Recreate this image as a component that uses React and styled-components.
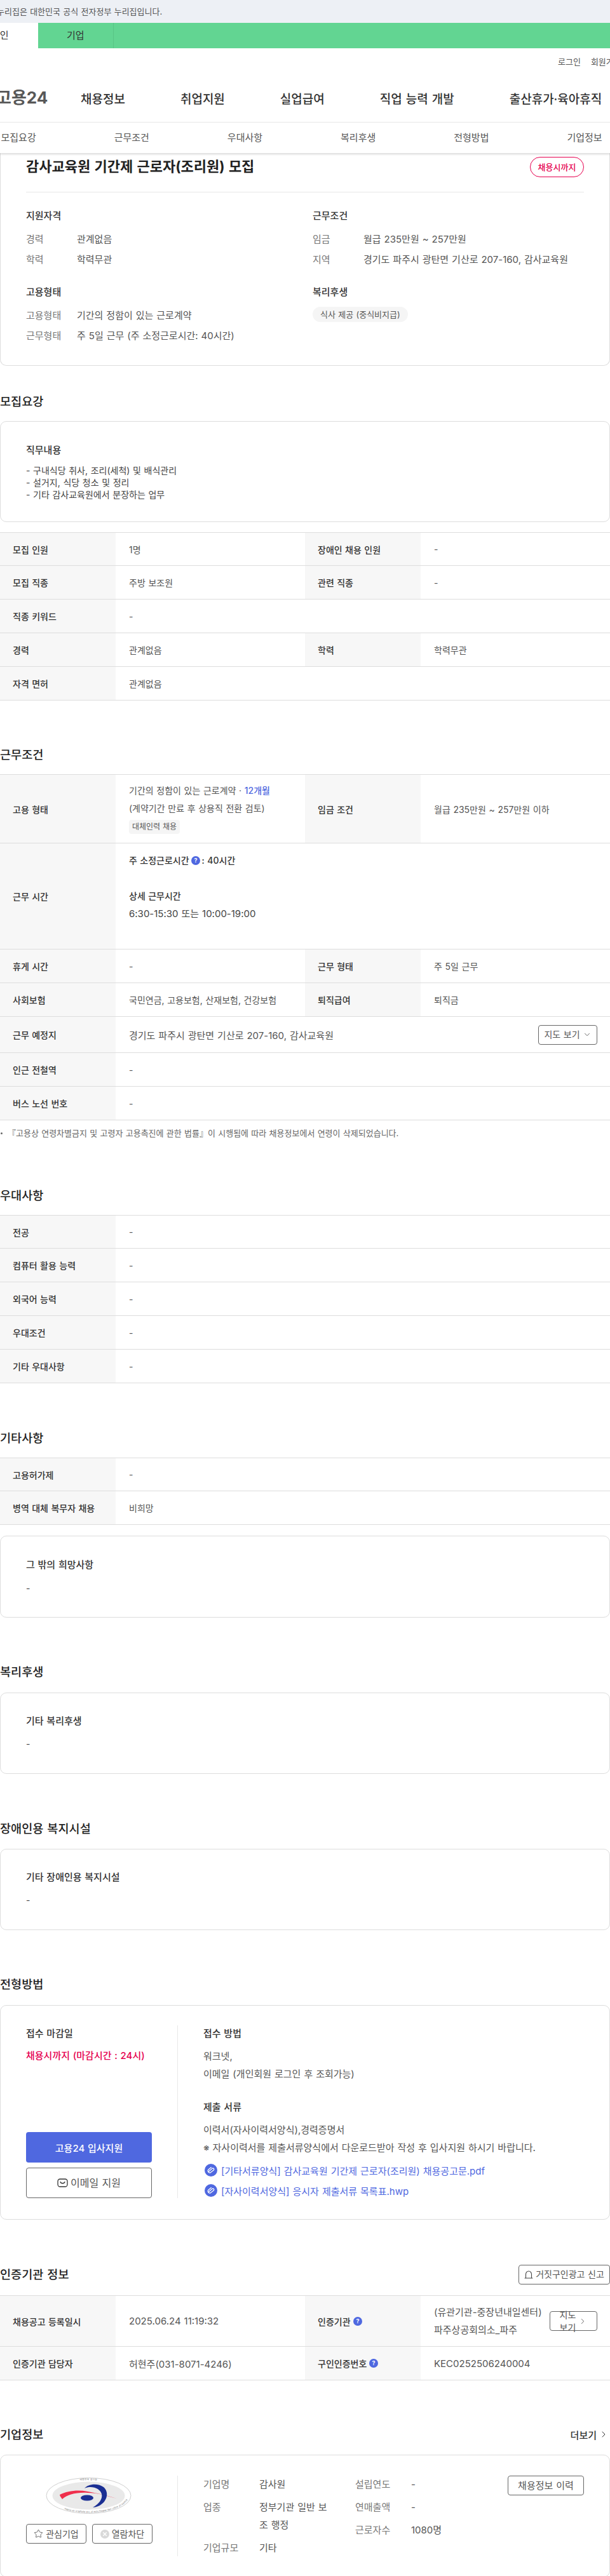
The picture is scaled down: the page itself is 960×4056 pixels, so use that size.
import styled, { createGlobalStyle } from "styled-components";
import { ChevronDown, ChevronRight, Star } from "lucide-react";

const GlobalStyle = createGlobalStyle`
  * { box-sizing: border-box; word-spacing: 0.05em; }
  html, body { margin: 0; padding: 0; background: #fff; }
  body {
    width: 960px;
    overflow-x: hidden;
    font-family: Inter, "Noto Sans CJK KR", "Noto Sans", sans-serif;
    color: #444;
    font-size: 14px;
  }
`;

const Page = styled.div`
  width: 960px;
  height: 4056px;
  overflow: hidden;
`;
const GovBar = styled.div`
  height: 36px;
  background: #edf0f5;
  line-height: 36px;
  font-size: 13px;
  color: #555;
  white-space: nowrap;
  span { display: block; margin-left: -5px; }
`;
const UserTabs = styled.div`
  height: 40px;
  background: #62d592;
  display: flex;
`;
const UserTab = styled.div`
  width: 119.5px;
  text-align: center;
  line-height: 40px;
  font-size: 15px;
  color: #333;
  background: ${(p) => (p.$on ? "#fff" : "transparent")};
  border-right: ${(p) => (p.$on ? "0" : "1px solid #58c585")};
  &:first-child { margin-left: -60px; }
`;
const Util = styled.div`
  height: 40px;
  display: flex;
  align-items: center;
  gap: 16px;
  padding-left: 878px;
  font-size: 13px;
  color: #555;
  white-space: nowrap;
`;
const Gnb = styled.nav`
  height: 76px;
  display: flex;
  align-items: center;
  white-space: nowrap;
  gap: 87px;
  padding-left: 127px;
  position: relative;
`;
const Logo = styled.div`
  position: absolute;
  left: -6px;
  top: 19px;
  font-size: 26px;
  font-weight: 700;
  color: #585858;
  line-height: 38px;
`;
const GnbItem = styled.a`
  font-size: 19px;
  font-weight: 500;
  color: #333;
`;
const SubTabs = styled.div`
  height: 49px;
  border-top: 1px solid #e8e8e8;
  background: #fff;
  position: relative;
  z-index: 2;
  box-shadow: 0 2px 3px rgba(0, 0, 0, 0.15);
`;
const SubTabGrid = styled.div`
  display: grid;
  grid-template-columns: repeat(6, 178.2px);
  margin-left: -60px;
  width: 1070px;
`;
const SubTab = styled.a`
  line-height: 48px;
  text-align: center;
  font-size: 15px;
  color: #555;
`;
const SummaryCard = styled.section`
  height: 335px;
  border: 1px solid #ddd;
  border-top: 0;
  border-radius: 0 0 10px 10px;
  padding: 0 40px;
`;
const TitleRow = styled.div`
  height: 62px;
  padding-top: 6px;
  display: flex;
  justify-content: space-between;
  align-items: flex-start;
  border-bottom: 1px solid #e8e8e8;
`;
const JobTitle = styled.h1`
  margin: 0;
  font-size: 22px;
  font-weight: 700;
  line-height: 30px;
  color: #222;
`;
const DeadlineBadge = styled.span`
  width: 85px;
  height: 32px;
  border: 1px solid #e6004f;
  border-radius: 16px;
  color: #e6004f;
  font-size: 13px;
  font-weight: 500;
  line-height: 30px;
  text-align: center;
`;
const SummaryGrid = styled.div`
  display: grid;
  grid-template-columns: 451px 1fr;
  padding-top: 25px;
  row-gap: 27px;
`;
const GroupTitle = styled.h3`
  margin: 0 0 ${(p) => p.$gap || 13}px;
  font-size: 15px;
  font-weight: 500;
  line-height: 24px;
  color: #333;
`;
const InfoRow = styled.div`
  display: flex;
  line-height: 24px;
  font-size: 15px;
  margin-bottom: 8px;
  color: #555;
  &:last-child { margin-bottom: 0; }
`;
const InfoKey = styled.span`
  width: 80px;
  color: #777;
  flex: none;
`;
const Pill = styled.span`
  display: inline-block;
  height: 24px;
  line-height: 24px;
  padding: 0 12px;
  border-radius: 12px;
  background: #f5f5f5;
  font-size: 13px;
  color: #555;
`;
const Section = styled.section`
  margin-top: ${(p) => p.$top}px;
`;
const HeadRow = styled.div`
  display: flex;
  justify-content: space-between;
  align-items: center;
  height: 28px;
  margin-bottom: ${(p) => p.$gap ?? 17}px;
`;
const Heading = styled.h2`
  margin: 0;
  font-size: 18.6px;
  font-weight: 500;
  line-height: 28px;
  color: #222;
`;
const Box = styled.div`
  border: 1px solid #ddd;
  border-radius: 10px;
  padding: ${(p) => p.$pad || "33px 40px"};
  margin-bottom: ${(p) => p.$below || 0}px;
  margin-top: ${(p) => p.$above || 0}px;
`;
const BoxTitle = styled.h3`
  margin: 0 0 ${(p) => p.$gap || 10}px;
  font-size: 15px;
  font-weight: 500;
  line-height: 24px;
  color: #333;
`;
const BoxText = styled.div`
  line-height: 19px;
  color: #444;
  white-space: pre-line;
`;
const Table = styled.div`
  border-top: 1px solid #ddd;
`;
const Row = styled.div`
  display: grid;
  grid-template-columns: 182px 298px 182px 298px;
  min-height: ${(p) => p.$h || 53}px;
  border-bottom: 1px solid #ddd;
  &:first-child { min-height: ${(p) => (p.$h || 53) - 1}px; }
`;
const Label = styled.div`
  background: #f7f7f7;
  padding-left: 20px;
  display: flex;
  align-items: center;
  gap: 4px;
  font-weight: 500;
  color: #333;
`;
const Value = styled.div`
  grid-column: ${(p) => (p.$wide ? "2 / 5" : "auto")};
  padding: ${(p) => p.$pad || "0 0 0 21px"};
  display: flex;
  align-items: center;
  color: #555;
  font-size: ${(p) => p.$size || 14}px;
`;
const Stack = styled.div`
  line-height: 28px;
`;
const Accent = styled.span`
  color: #4f68e0;
  font-weight: 500;
`;
const SmallTag = styled.span`
  display: block;
  width: 80px;
  height: 22px;
  margin-top: 4px;
  border-radius: 4px;
  background: #f5f5f5;
  font-size: 12px;
  line-height: 22px;
  text-align: center;
  color: #555;
`;
const Strong = styled.div`
  font-weight: 500;
  color: #333;
  display: flex;
  align-items: center;
  gap: 3px;
`;
const WorkTime = styled.div`
  font-size: 15px;
  color: #444;
`;
const OutlineBtn = styled.button`
  font-family: inherit;
  font-size: ${(p) => p.$size || 14}px;
  line-height: 1.4;
  color: #555;
  background: #fff;
  border: 1px solid #666;
  border-radius: 4px;
  height: ${(p) => p.$h || 31}px;
  width: ${(p) => (p.$w ? p.$w + "px" : "auto")};
  padding: 0;
  display: flex;
  align-items: center;
  justify-content: center;
  gap: 4px;
  flex: none;
  margin-left: ${(p) => (p.$push ? "auto" : "0")};
`;
const Note = styled.div`
  margin-top: 11px;
  font-size: 13px;
  line-height: 18px;
  color: #666;
  padding-left: 12px;
  position: relative;
  &::before {
    content: "";
    position: absolute;
    left: 1px;
    top: 8px;
    width: 3px;
    height: 3px;
    border-radius: 50%;
    background: #666;
  }
`;
const ApplyBox = styled(Box)`
  display: flex;
  padding: 31px 40px 32px;
`;
const ApplyLeft = styled.div`
  width: 239px;
  height: 272px;
  padding-right: 40px;
  border-right: 1px solid #e8e8e8;
  display: flex;
  flex-direction: column;
  flex: none;
`;
const ApplyRight = styled.div`
  padding-left: 40px;
`;
const ApplyTitle = styled.div`
  font-size: 15px;
  font-weight: 500;
  line-height: 26px;
  color: #333;
  margin-top: ${(p) => p.$top || 0}px;
  margin-bottom: 9px;
`;
const Deadline = styled.div`
  font-size: 15px;
  font-weight: 500;
  line-height: 26px;
  color: #e6004f;
`;
const ApplyText = styled.div`
  font-size: 15px;
  line-height: 28px;
  color: #555;
`;
const PrimaryBtn = styled.button`
  font-family: inherit;
  margin-top: auto;
  height: 48px;
  border: 0;
  border-radius: 4px;
  background: #4f68e0;
  color: #fff;
  font-size: 15px;
  font-weight: 500;
  margin-bottom: 8px;
`;
const FileLink = styled.a`
  display: flex;
  align-items: center;
  gap: 6px;
  height: 26px;
  margin-top: ${(p) => p.$top}px;
  margin-left: 2px;
  color: #4f68e0;
  font-size: 15px;
  white-space: nowrap;
`;
const MoreLink = styled.a`
  display: flex;
  align-items: center;
  gap: 3px;
  font-size: 15px;
  font-weight: 500;
  color: #333;
  margin-right: 2px;
`;
const CompanyCard = styled(Box)`
  display: flex;
  height: 193px;
  padding: 32px 40px 0;
`;
const CompanyLeft = styled.div`
  width: 239px;
  height: 127px;
  padding-right: 40px;
  border-right: 1px solid #e8e8e8;
  flex: none;
`;
const LogoWrap = styled.div`
  height: 76px;
  padding: 3px 0 0 31px;
`;
const BtnPair = styled.div`
  display: flex;
  gap: 9px;
`;
const CompanyInfo = styled.div`
  padding-left: 40px;
  display: flex;
  flex: 1;
  align-items: flex-start;
`;
const InfoCol = styled.dl`
  margin: 0;
  width: ${(p) => p.$w}px;
  display: grid;
  grid-template-columns: 88px 1fr;
  row-gap: 8px;
  font-size: 15px;
  line-height: 28px;
  color: #666;
  dt { color: #777; }
  dd { margin: 0; color: #555; max-width: 112px; }
`;

const HelpIcon = () => (
  <svg width="14" height="14" viewBox="0 0 14 14">
    <circle cx="7" cy="7" r="7" fill="#4f68e0" />
    <text x="7" y="10.2" textAnchor="middle" fontSize="9" fontWeight="700" fill="#fff">?</text>
  </svg>
);
const ClipIcon = () => (
  <svg width="20" height="20" viewBox="0 0 20 20">
    <circle cx="10" cy="10" r="10" fill="#4f68e0" />
    <path d="M7 12.5 L11.6 6.9 a1.8 1.8 0 0 1 2.7 2.3 L9.6 14 a3 3 0 0 1 -4 -4 L9.8 5.6" fill="none" stroke="#fff" strokeWidth="1.3" strokeLinecap="round" transform="rotate(8 10 10)" />
  </svg>
);
const MailIcon = () => (
  <svg width="17" height="14" viewBox="0 0 17 14">
    <rect x="1" y="1" width="15" height="12" rx="3.5" fill="none" stroke="#333" strokeWidth="1.3" />
    <path d="M5 5.5 C6 8.5 11 8.5 12 5.5" fill="none" stroke="#333" strokeWidth="1.3" strokeLinecap="round" />
  </svg>
);
const AlarmIcon = () => (
  <svg width="14" height="13" viewBox="0 0 14 13">
    <path d="M2.5 11.5 V6 a4.5 5 0 0 1 9 0 V11.5 M1 12 H13" fill="none" stroke="#444" strokeWidth="1.1" strokeLinecap="round" />
  </svg>
);
const BlockIcon = () => (
  <svg width="14" height="14" viewBox="0 0 14 14">
    <circle cx="7" cy="7" r="7" fill="#d9d9d9" />
    <path d="M4.3 4.3 L9.7 9.7 M9.7 4.3 L4.3 9.7" stroke="#fff" strokeWidth="1.5" />
  </svg>
);
const AuditLogo = () => (
  <svg width="135" height="57" viewBox="0 0 135 57">
    <ellipse cx="67.5" cy="28.5" rx="66.5" ry="28" fill="#fff" stroke="#cfcfcf" />
    <ellipse cx="67.5" cy="28.5" rx="57" ry="22" fill="#e9e9e9" />
    <defs>
      <path id="ring" d="M7 28.5 a60.5 24.5 0 1 1 121 0 a60.5 24.5 0 1 1 -121 0" />
    </defs>
    <text fontSize="3.6" fill="#666" letterSpacing="0.4">
      <textPath href="#ring" startOffset="20%">대한민국 감사원 </textPath>
    </text>
    <text fontSize="3.2" fill="#666">
      <textPath href="#ring" startOffset="52%">BOARD OF AUDIT AND INSPECTION OF THE REPUBLIC OF KOREA</textPath>
    </text>
    <path d="M22 27 C34 21 50 19 66 22 C84 25 98 29 112 33 C96 29 82 24 66 24 C48 23 33 27 26 34 C24 31 22 29 22 27 Z" fill="#ef2f4c" />
    <path d="M61 17 C66 10 82 8 91 15 C100 23 97 37 85 44 C81 46 77 47 74 47 C83 42 90 34 88 26 C86 17 72 12 61 17 Z" fill="#1b2f93" />
    <ellipse cx="65" cy="32" rx="10" ry="4.5" fill="#1b2f93" />
  </svg>
);

const TableBlock = ({ rows }) => (
  <Table>
    {rows.map((r) => (
      <Row key={r[0]}>
        <Label>{r[0]}</Label>
        <Value $wide={r.length === 2}>{r[1]}</Value>
        {r.length > 2 && <Label>{r[2]}</Label>}
        {r.length > 2 && <Value>{r[3]}</Value>}
      </Row>
    ))}
  </Table>
);

export default function App() {
  return (
    <Page>
      <GlobalStyle />
      <GovBar><span>누리집은 대한민국 공식 전자정부 누리집입니다.</span></GovBar>
      <UserTabs>
        <UserTab $on>개인</UserTab>
        <UserTab>기업</UserTab>
      </UserTabs>
      <Util><span>로그인</span><span>회원가입</span></Util>
      <Gnb>
        <Logo>고용24</Logo>
        <GnbItem>채용정보</GnbItem>
        <GnbItem>취업지원</GnbItem>
        <GnbItem>실업급여</GnbItem>
        <GnbItem>직업 능력 개발</GnbItem>
        <GnbItem>출산휴가·육아휴직</GnbItem>
      </Gnb>
      <SubTabs>
        <SubTabGrid>
          {["모집요강", "근무조건", "우대사항", "복리후생", "전형방법", "기업정보"].map((t) => (
            <SubTab key={t}>{t}</SubTab>
          ))}
        </SubTabGrid>
      </SubTabs>

      <SummaryCard>
        <TitleRow>
          <JobTitle>감사교육원 기간제 근로자(조리원) 모집</JobTitle>
          <DeadlineBadge>채용시까지</DeadlineBadge>
        </TitleRow>
        <SummaryGrid>
          <div>
            <GroupTitle>지원자격</GroupTitle>
            <InfoRow><InfoKey>경력</InfoKey>관계없음</InfoRow>
            <InfoRow><InfoKey>학력</InfoKey>학력무관</InfoRow>
          </div>
          <div>
            <GroupTitle>근무조건</GroupTitle>
            <InfoRow><InfoKey>임금</InfoKey>월급 235만원 ~ 257만원</InfoRow>
            <InfoRow><InfoKey>지역</InfoKey>경기도 파주시 광탄면 기산로 207-160, 감사교육원</InfoRow>
          </div>
          <div>
            <GroupTitle>고용형태</GroupTitle>
            <InfoRow><InfoKey>고용형태</InfoKey>기간의 정함이 있는 근로계약</InfoRow>
            <InfoRow><InfoKey>근무형태</InfoKey>주 5일 근무 (주 소정근로시간: 40시간)</InfoRow>
          </div>
          <div>
            <GroupTitle $gap={11}>복리후생</GroupTitle>
            <Pill>식사 제공 (중식비지급)</Pill>
          </div>
        </SummaryGrid>
      </SummaryCard>

      <Section $top={42}>
        <HeadRow><Heading>모집요강</Heading></HeadRow>
        <Box $below={16}>
          <BoxTitle>직무내용</BoxTitle>
          <BoxText>{"- 구내식당 취사, 조리(세척) 및 배식관리\n- 설거지, 식당 청소 및 정리\n- 기타 감사교육원에서 분장하는 업무"}</BoxText>
        </Box>
        <TableBlock
          rows={[
            ["모집 인원", "1명", "장애인 채용 인원", "-"],
            ["모집 직종", "주방 보조원", "관련 직종", "-"],
            ["직종 키워드", "-"],
            ["경력", "관계없음", "학력", "학력무관"],
            ["자격 면허", "관계없음"],
          ]}
        />
      </Section>

      <Section $top={71}>
        <HeadRow><Heading>근무조건</Heading></HeadRow>
        <Table>
          <Row $h={109}>
            <Label>고용 형태</Label>
            <Value $pad="0 0 4px 21px">
              <Stack>
                <div>기간의 정함이 있는 근로계약 · <Accent>12개월</Accent></div>
                <div>(계약기간 만료 후 상용직 전환 검토)</div>
                <SmallTag>대체인력 채용</SmallTag>
              </Stack>
            </Value>
            <Label>임금 조건</Label>
            <Value>월급 235만원 ~ 257만원 이하</Value>
          </Row>
          <Row $h={165}>
            <Label>근무 시간</Label>
            <Value $wide $pad="13px 0 41px 21px">
              <Stack>
                <Strong>주 소정근로시간 <HelpIcon />: 40시간</Strong>
                <br />
                <Strong>상세 근무시간</Strong>
                <WorkTime>6:30-15:30 또는 10:00-19:00</WorkTime>
              </Stack>
            </Value>
          </Row>
          <Row>
            <Label>휴게 시간</Label><Value>-</Value>
            <Label>근무 형태</Label><Value>주 5일 근무</Value>
          </Row>
          <Row>
            <Label>사회보험</Label><Value>국민연금, 고용보험, 산재보험, 건강보험</Value>
            <Label>퇴직급여</Label><Value>퇴직금</Value>
          </Row>
          <Row $h={57}>
            <Label>근무 예정지</Label>
            <Value $wide $size={15} $pad="0 20px 0 21px">
              경기도 파주시 광탄면 기산로 207-160, 감사교육원
              <OutlineBtn $push $w={93} $size={14}>지도 보기 <ChevronDown size={14} strokeWidth={1.5} /></OutlineBtn>
            </Value>
          </Row>
          <Row><Label>인근 전철역</Label><Value $wide>-</Value></Row>
          <Row><Label>버스 노선 번호</Label><Value $wide>-</Value></Row>
        </Table>
        <Note>『고용상 연령차별금지 및 고령자 고용촉진에 관한 법률』이 시행됨에 따라 채용정보에서 연령이 삭제되었습니다.</Note>
      </Section>

      <Section $top={75}>
        <HeadRow><Heading>우대사항</Heading></HeadRow>
        <TableBlock
          rows={[
            ["전공", "-"],
            ["컴퓨터 활용 능력", "-"],
            ["외국어 능력", "-"],
            ["우대조건", "-"],
            ["기타 우대사항", "-"],
          ]}
        />
      </Section>

      <Section $top={72}>
        <HeadRow><Heading>기타사항</Heading></HeadRow>
        <TableBlock rows={[["고용허가제", "-"], ["병역 대체 복무자 채용", "비희망"]]} />
        <Box $above={17} $pad="33px 40px 36px">
          <BoxTitle $gap={15}>그 밖의 희망사항</BoxTitle>
          <BoxText>-</BoxText>
        </Box>
      </Section>

      <Section $top={71}>
        <HeadRow $gap={19}><Heading>복리후생</Heading></HeadRow>
        <Box $pad="32px 40px 37px">
          <BoxTitle $gap={14}>기타 복리후생</BoxTitle>
          <BoxText>-</BoxText>
        </Box>
      </Section>

      <Section $top={72}>
        <HeadRow $gap={18}><Heading>장애인용 복지시설</Heading></HeadRow>
        <Box $pad="32px 40px 37px">
          <BoxTitle $gap={14}>기타 장애인용 복지시설</BoxTitle>
          <BoxText>-</BoxText>
        </Box>
      </Section>

      <Section $top={71}>
        <HeadRow $gap={19}><Heading>전형방법</Heading></HeadRow>
        <ApplyBox>
          <ApplyLeft>
            <ApplyTitle>접수 마감일</ApplyTitle>
            <Deadline>채용시까지 (마감시간 : 24시)</Deadline>
            <PrimaryBtn>고용24 입사지원</PrimaryBtn>
            <OutlineBtn $h={48} $size={16}><MailIcon />이메일 지원</OutlineBtn>
          </ApplyLeft>
          <ApplyRight>
            <ApplyTitle>접수 방법</ApplyTitle>
            <ApplyText>워크넷,<br />이메일 (개인회원 로그인 후 조회가능)</ApplyText>
            <ApplyTitle $top={25}>제출 서류</ApplyTitle>
            <ApplyText>이력서(자사이력서양식),경력증명서<br />※ 자사이력서를 제출서류양식에서 다운로드받아 작성 후 입사지원 하시기 바랍니다.</ApplyText>
            <FileLink $top={8}><ClipIcon />[기타서류양식] 감사교육원 기간제 근로자(조리원) 채용공고문.pdf</FileLink>
            <FileLink $top={6}><ClipIcon />[자사이력서양식] 응시자 제출서류 목록표.hwp</FileLink>
          </ApplyRight>
        </ApplyBox>
      </Section>

      <Section $top={72}>
        <HeadRow $gap={19}>
          <Heading>인증기관 정보</Heading>
          <OutlineBtn $w={144} $size={14}><AlarmIcon />거짓구인광고 신고</OutlineBtn>
        </HeadRow>
        <Table>
          <Row $h={81}>
            <Label>채용공고 등록일시</Label>
            <Value $size={15}>2025.06.24 11:19:32</Value>
            <Label>인증기관 <HelpIcon /></Label>
            <Value $size={15} $pad="0 20px 0 21px">
              <Stack>(유관기관-중장년내일센터)<br />파주상공회의소_파주</Stack>
              <OutlineBtn $push $w={75} $size={14}><span>지도<br />보기</span><ChevronRight size={14} strokeWidth={1.5} /></OutlineBtn>
            </Value>
          </Row>
          <Row>
            <Label>인증기관 담당자</Label>
            <Value $size={15}>허현주(031-8071-4246)</Value>
            <Label>구인인증번호 <HelpIcon /></Label>
            <Value $size={15}>KEC0252506240004</Value>
          </Row>
        </Table>
      </Section>

      <Section $top={71}>
        <HeadRow $gap={18}>
          <Heading>기업정보</Heading>
          <MoreLink>더보기 <ChevronRight size={16} strokeWidth={1.5} /></MoreLink>
        </HeadRow>
        <CompanyCard>
          <CompanyLeft>
            <LogoWrap><AuditLogo /></LogoWrap>
            <BtnPair>
              <OutlineBtn $w={95}><Star size={15} strokeWidth={1.4} />관심기업</OutlineBtn>
              <OutlineBtn $w={95}><BlockIcon />열람차단</OutlineBtn>
            </BtnPair>
          </CompanyLeft>
          <CompanyInfo>
            <InfoCol $w={239}>
              <dt>기업명</dt><dd>감사원</dd>
              <dt>업종</dt><dd>정부기관 일반 보조 행정</dd>
              <dt>기업규모</dt><dd>기타</dd>
            </InfoCol>
            <InfoCol $w={200}>
              <dt>설립연도</dt><dd>-</dd>
              <dt>연매출액</dt><dd>-</dd>
              <dt>근로자수</dt><dd>1080명</dd>
            </InfoCol>
            <OutlineBtn $push $w={120} $size={15}>채용정보 이력</OutlineBtn>
          </CompanyInfo>
        </CompanyCard>
      </Section>
    </Page>
  );
}
